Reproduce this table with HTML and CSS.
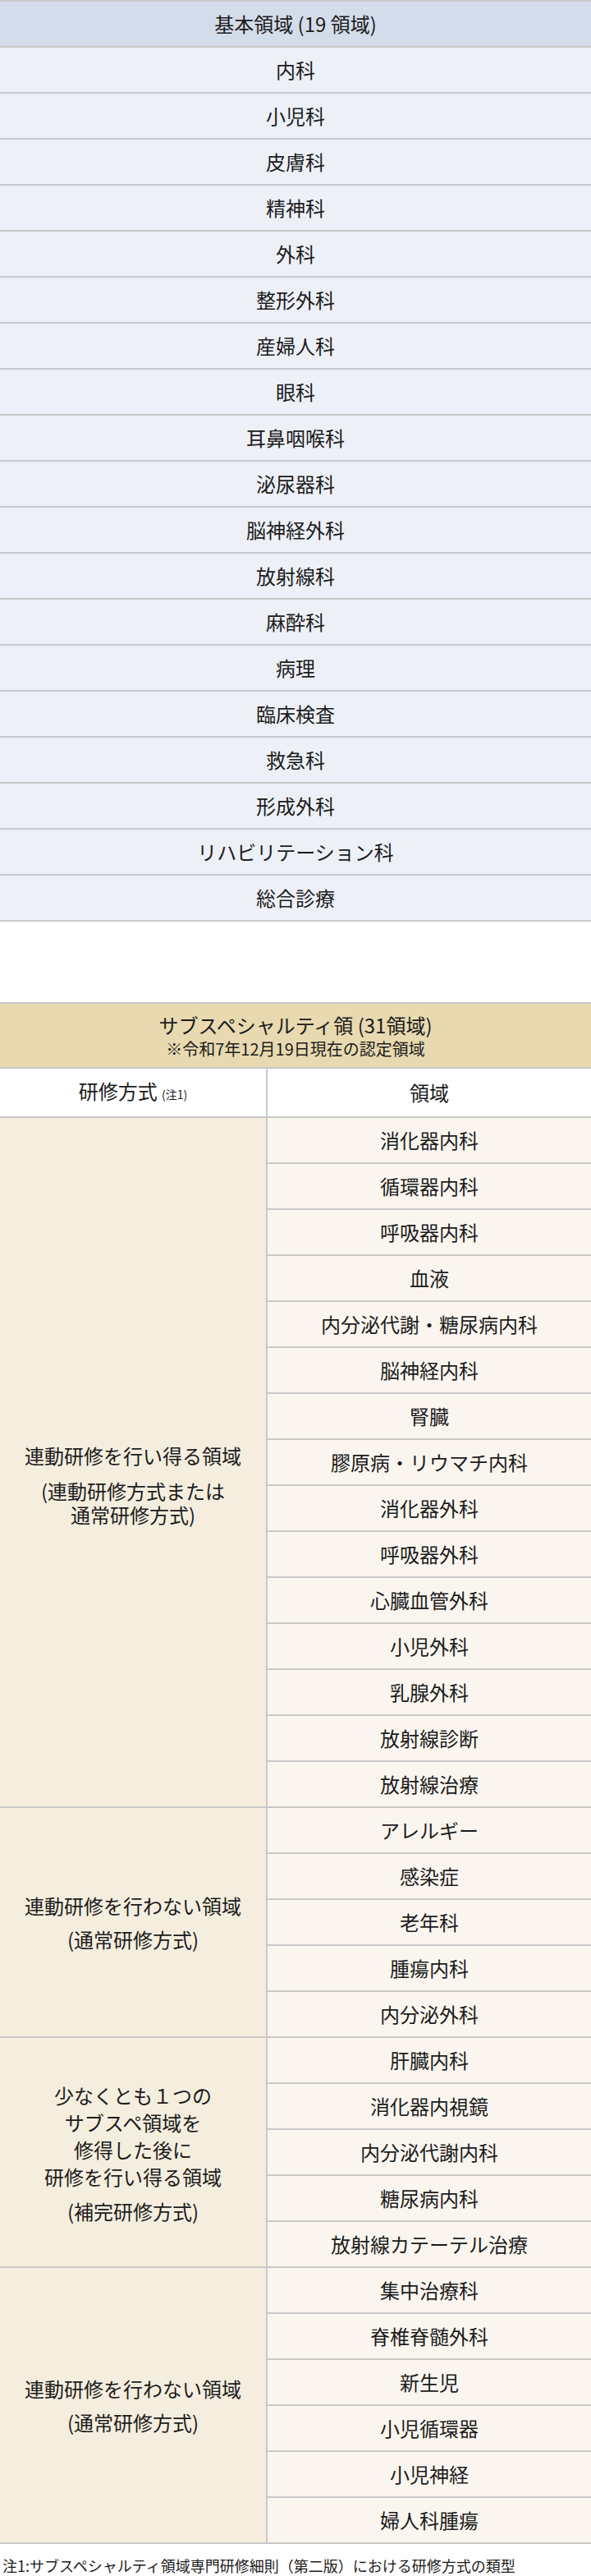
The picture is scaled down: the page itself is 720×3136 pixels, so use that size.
FILE: index.html
```html
<!DOCTYPE html>
<html lang="ja">
<head>
<meta charset="utf-8">
<title>基本領域・サブスペシャルティ領域</title>
<link rel="stylesheet" href="styles.css">
</head>
<body>
<table class="field-table basic">
  <thead>
    <tr><th class="title-cell">基本領域 (19 領域)</th></tr>
  </thead>
  <tbody>
    <tr><td>内科</td></tr>
    <tr><td>小児科</td></tr>
    <tr><td>皮膚科</td></tr>
    <tr><td>精神科</td></tr>
    <tr><td>外科</td></tr>
    <tr><td>整形外科</td></tr>
    <tr><td>産婦人科</td></tr>
    <tr><td>眼科</td></tr>
    <tr><td>耳鼻咽喉科</td></tr>
    <tr><td>泌尿器科</td></tr>
    <tr><td>脳神経外科</td></tr>
    <tr><td>放射線科</td></tr>
    <tr><td>麻酔科</td></tr>
    <tr><td>病理</td></tr>
    <tr><td>臨床検査</td></tr>
    <tr><td>救急科</td></tr>
    <tr><td>形成外科</td></tr>
    <tr><td>リハビリテーション科</td></tr>
    <tr><td>総合診療</td></tr>
  </tbody>
</table>

<table class="field-table sub">
  <thead>
    <tr>
      <th colspan="2" class="title-cell">
        <span class="title">サブスペシャルティ領 (31領域)</span>
        <span class="subtitle">※令和7年12月19日現在の認定領域</span>
      </th>
    </tr>
    <tr>
      <th class="method-head">研修方式 <small>(注1)</small></th>
      <th class="area-head">領域</th>
    </tr>
  </thead>
  <tbody>
    <tr>
      <td class="method group-linked" rowspan="15">
        <p>連動研修を行い得る領域</p>
        <p class="tight">(連動研修方式または<br>通常研修方式)</p>
      </td>
      <td class="area">消化器内科</td>
    </tr>
    <tr><td class="area">循環器内科</td></tr>
    <tr><td class="area">呼吸器内科</td></tr>
    <tr><td class="area">血液</td></tr>
    <tr><td class="area">内分泌代謝・糖尿病内科</td></tr>
    <tr><td class="area">脳神経内科</td></tr>
    <tr><td class="area">腎臓</td></tr>
    <tr><td class="area">膠原病・リウマチ内科</td></tr>
    <tr><td class="area">消化器外科</td></tr>
    <tr><td class="area">呼吸器外科</td></tr>
    <tr><td class="area">心臓血管外科</td></tr>
    <tr><td class="area">小児外科</td></tr>
    <tr><td class="area">乳腺外科</td></tr>
    <tr><td class="area">放射線診断</td></tr>
    <tr><td class="area">放射線治療</td></tr>

    <tr>
      <td class="method" rowspan="5">
        <p>連動研修を行わない領域</p>
        <p>(通常研修方式)</p>
      </td>
      <td class="area">アレルギー</td>
    </tr>
    <tr><td class="area">感染症</td></tr>
    <tr><td class="area">老年科</td></tr>
    <tr><td class="area">腫瘍内科</td></tr>
    <tr><td class="area">内分泌外科</td></tr>

    <tr>
      <td class="method" rowspan="5">
        <p class="loose">少なくとも１つの<br>サブスペ領域を<br>修得した後に<br>研修を行い得る領域</p>
        <p>(補完研修方式)</p>
      </td>
      <td class="area">肝臓内科</td>
    </tr>
    <tr><td class="area">消化器内視鏡</td></tr>
    <tr><td class="area">内分泌代謝内科</td></tr>
    <tr><td class="area">糖尿病内科</td></tr>
    <tr><td class="area">放射線カテーテル治療</td></tr>

    <tr>
      <td class="method" rowspan="6">
        <p>連動研修を行わない領域</p>
        <p>(通常研修方式)</p>
      </td>
      <td class="area">集中治療科</td>
    </tr>
    <tr><td class="area">脊椎脊髄外科</td></tr>
    <tr><td class="area">新生児</td></tr>
    <tr><td class="area">小児循環器</td></tr>
    <tr><td class="area">小児神経</td></tr>
    <tr><td class="area">婦人科腫瘍</td></tr>
  </tbody>
</table>

<p class="footnote">注1:サブスペシャルティ領域専門研修細則（第二版）における研修方式の類型</p>
</body>
</html>
```

FILE: styles.css
```css
html,
body {
  margin: 0;
  padding: 0;
  background: #ffffff;
}

body {
  font-family: "Noto Sans CJK JP", "Noto Sans", sans-serif;
  font-size: 24px;
  color: #1c1c1c;
}

.field-table {
  width: 100%;
  border-collapse: separate;
  border-spacing: 0;
  border-top: 2px solid #c9c9c9;
  text-align: center;
}

.field-table th,
.field-table td {
  padding: 0;
  font-weight: normal;
  line-height: 54px;
  vertical-align: middle;
  border-bottom: 2px solid #c9c9c9;
}

/* 基本領域 */
.basic th {
  background: #d3dcea;
}

.basic td {
  background: #edf0f7;
}

/* サブスペシャルティ領域 */
.sub {
  margin-top: 98px;
}

.sub .title-cell {
  background: #e8d9b0;
  padding: 11px 0 8px;
  line-height: normal;
}

.sub .title {
  display: block;
  font-size: 24px;
  line-height: 30px;
}

.sub .subtitle {
  display: block;
  font-size: 20px;
  line-height: 28px;
}

.method-head {
  width: 324px;
  background: #ffffff;
  border-right: 2px solid #c9c9c9;
}

.method-head small {
  font-size: 14px;
}

.area-head {
  background: #ffffff;
}

.field-table td.method {
  background: #f5eedf;
  border-right: 2px solid #c9c9c9;
  padding: 0 18px;
  line-height: 31px;
}

.method p {
  margin: 0;
}

.method p + p {
  margin-top: 10px;
}

.method p.tight {
  line-height: 29px;
}

.method p.loose {
  line-height: 33px;
}

.field-table td.group-linked {
  padding-top: 54px;
}

.group-linked p + p {
  margin-top: 13px;
}

.field-table td.area {
  background: #faf6ef;
}

.footnote {
  margin: 13px 0 0;
  padding-left: 3px;
  font-size: 18px;
  line-height: 27px;
}
```
